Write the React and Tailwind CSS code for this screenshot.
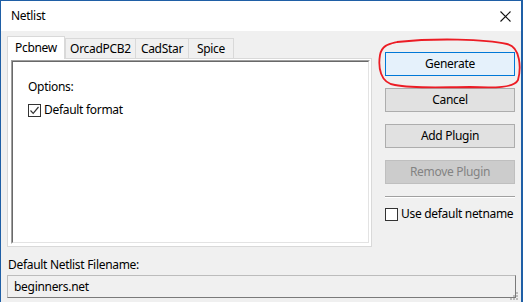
function Check({ checked }) {
  return (
    <span className="flex h-[13px] w-[13px] shrink-0 items-center justify-center border border-[#333333] bg-white">
      {checked && (
        <svg width="11" height="11" viewBox="0 0 11 11">
          <path d="M1.5 5.5 L4.2 8.3 L9.5 2" fill="none" stroke="#333333" strokeWidth="1.2" />
        </svg>
      )}
    </span>
  )
}

function Button({ children, primary, disabled }) {
  const tone = primary
    ? 'border-[#0078d7] bg-[#e5f1fb] text-black'
    : disabled
      ? 'border-[#bfbfbf] bg-[#cccccc] text-[#838383]'
      : 'border-[#adadad] bg-[#e1e1e1] text-black'
  return (
    <div className={`flex h-[24px] w-[130px] items-center justify-center border ${tone}`}>
      {children}
    </div>
  )
}

export default function App() {
  const tabs = ['OrcadPCB2', 'CadStar', 'Spice']
  const tabW = ['w-[71px]', 'w-[54px]', 'w-[46px]']

  return (
    <div
      className="relative h-[302px] w-[524px] overflow-hidden bg-white text-[12px] leading-none tracking-[-0.3px] text-black"
      style={{ fontFamily: '"Noto Sans", "Open Sans", sans-serif' }}
    >
      <div className="flex h-full w-[523px] flex-col border-l border-r-2 border-t border-[#1f5fa6]">
        {/* title bar */}
        <div className="flex h-[30px] shrink-0 items-center justify-between bg-white pl-[10px] pr-[10px]">
          <span className="pb-[1px]">Netlist</span>
          <svg width="11" height="11" viewBox="0 0 11 11">
            <path d="M0.5 0.5 L10.5 10.5 M10.5 0.5 L0.5 10.5" stroke="#111" strokeWidth="1.1" />
          </svg>
        </div>

        {/* body */}
        <div className="flex flex-1 flex-col bg-[#f0f0f0] pl-[6px] pr-[6px] pt-[5px]">
          <div className="flex gap-[13px]">
            {/* notebook */}
            <div className="flex w-[366px] flex-col">
              <div className="relative z-10 flex h-[22px] items-start">
                <div className="flex h-[23px] w-[58px] items-center justify-center border border-b-0 border-[#d9d9d9] bg-white pb-[1px]">
                  Pcbnew
                </div>
                {tabs.map((t, i) => (
                  <div
                    key={t}
                    className={`mt-[2px] flex h-[21px] ${tabW[i]} items-center justify-center border border-[#d9d9d9] bg-[#f0f0f0] ${i === 0 ? '' : '-ml-[1px]'}`}
                  >
                    {t}
                  </div>
                ))}
              </div>
              <div className="flex h-[189px] border border-[#d9d9d9] bg-white pb-[2px] pl-[3px] pr-[1px] pt-[1px]">
                <div className="flex flex-1 border border-[#a0a0a0] border-b-white border-r-white">
                  <div className="flex flex-1 flex-col border border-[#696969] border-b-[#e3e3e3] border-r-[#e3e3e3] pl-[15px] pt-[19px]">
                    <span>Options:</span>
                    <div className="mt-[11px] flex items-center gap-[3px]">
                      <Check checked />
                      <span className="pb-[1px]">Default format</span>
                    </div>
                  </div>
                </div>
              </div>
            </div>

            {/* buttons */}
            <div className="flex w-[130px] flex-col pt-[16px]">
              <div className="flex flex-col gap-[12px]">
                <Button primary>Generate</Button>
                <Button>Cancel</Button>
                <Button>Add Plugin</Button>
                <Button disabled>Remove Plugin</Button>
              </div>
              <div className="mt-[12px] h-[2px] border-t border-b border-t-[#a0a0a0] border-b-white" />
              <div className="mt-[10px] flex items-center gap-[3px] whitespace-nowrap">
                <Check />
                <span className="pb-[1px]">Use default netname</span>
              </div>
            </div>
          </div>

          <div className="mt-[12px] pl-[1px]">Default Netlist Filename:</div>
          <div className="mt-[4px] flex h-[23px] w-[509px] items-center border border-[#7a7a7a] border-t-[#bcbcbc] border-l-[#bcbcbc] bg-[#f0f0f0] pl-[6px]">
            beginners.net
          </div>
        </div>
      </div>

      {/* resize grip */}
      <svg width="10" height="10" viewBox="0 0 10 10" className="absolute left-[509px] top-[291px]">
        <rect x="7" y="1" width="2" height="2" fill="#bcbcbc" />
        <rect x="4" y="4" width="2" height="2" fill="#bcbcbc" />
        <rect x="7" y="4" width="2" height="2" fill="#bcbcbc" />
        <rect x="1" y="7" width="2" height="2" fill="#bcbcbc" />
        <rect x="4" y="7" width="2" height="2" fill="#bcbcbc" />
        <rect x="7" y="7" width="2" height="2" fill="#bcbcbc" />
      </svg>

      {/* red hand-drawn annotation */}
      <svg width="150" height="56" viewBox="0 0 150 56" className="absolute left-[375px] top-[37px]">
        <path
          d="M22 5 C 60 1, 110 2, 132 7 C 146 10, 146 32, 143 43 C 139 51, 120 51, 95 50 C 70 50, 40 52, 20 48 C 5 46, 3 30, 5 18 C 7 8, 14 7, 22 5 Z"
          fill="none"
          stroke="#ec1c24"
          strokeWidth="1.8"
        />
      </svg>
    </div>
  )
}
